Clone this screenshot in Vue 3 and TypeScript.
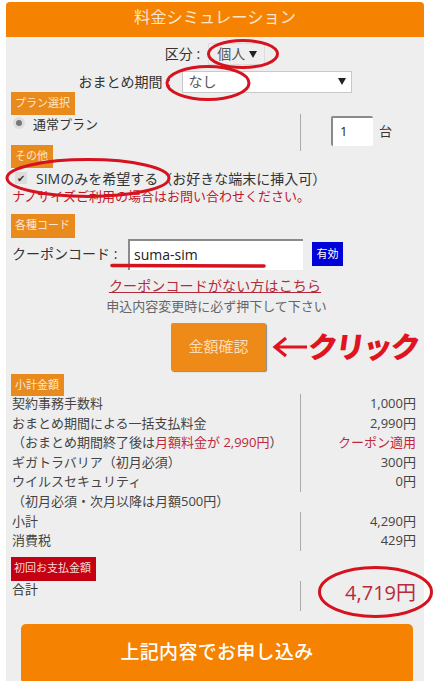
<script setup lang="ts">
interface Row { label: string; value?: string; red?: string; valueRed?: boolean; }
const rows: Row[] = [
  { label: '契約事務手数料', value: '1,000円' },
  { label: 'おまとめ期間による一括支払料金', value: '2,990円' },
  { label: '（おまとめ期間終了後は', red: '月額料金が 2,990円', value: 'クーポン適用', valueRed: true },
  { label: 'ギガトラバリア（初月必須）', value: '300円' },
  { label: 'ウイルスセキュリティ', value: '0円' },
  { label: '（初月必須・次月以降は月額500円）' },
  { label: '小計', value: '4,290円' },
  { label: '消費税', value: '429円' },
];
</script>

<template>
  <div class="page">
    <div class="panel">
      <header class="head">料金シミュレーション</header>
      <div class="body">
        <div class="line kubun">
          <span class="kubun-label">区分 :</span>
          <div class="select small"><span>個人</span><i class="caret"></i></div>
        </div>
        <div class="line period">
          <span class="period-label">おまとめ期間</span><b class="colon">:</b>
          <div class="select wide"><span>なし</span><i class="caret"></i></div>
        </div>
        <div class="tag t1">プラン選択</div>
        <div class="plan">
          <div class="plan-left"><span class="radio"></span>通常プラン</div>
          <div class="plan-right">
            <div class="qty">1</div><span>台</span>
          </div>
        </div>
        <div class="tag t2">その他</div>
        <div class="sim">
          <span class="check">✔</span><span>SIMのみを希望する（お好きな端末に挿入可）</span>
        </div>
        <div class="nano">ナノサイズご利用の場合はお問い合わせください。</div>
        <div class="tag t3">各種コード</div>
        <div class="coupon">
          <span class="coupon-label">クーポンコード :</span>
          <div class="coupon-input">suma-sim</div>
          <div class="apply">有効</div>
        </div>
        <a class="link">クーポンコードがない方はこちら</a>
        <div class="note">申込内容変更時に必ず押下して下さい</div>
        <div class="confirm-row">
          <div class="confirm">金額確認</div>
        </div>
        <div class="tag t4">小計金額</div>
        <div class="table">
          <div v-for="r in rows" :key="r.label" class="trow">
            <div class="tl">{{ r.label }}<span v-if="r.red" class="red">{{ r.red }}</span><span v-if="r.red">）</span></div>
            <div class="tv" :class="{ red: r.valueRed, nodiv: !r.value }">{{ r.value }}</div>
          </div>
        </div>
        <div class="tag t5">初回お支払金額</div>
        <div class="total">
          <div class="total-label">合計</div>
          <div class="total-value">4,719円</div>
        </div>
        <div class="submit">上記内容でお申し込み</div>
      </div>
    </div>

    <div class="click-note">
      <svg class="arrow" width="36" height="24" viewBox="0 0 36 24" aria-hidden="true">
        <path d="M35 12H4M14 3 3 12l11 9" fill="none" stroke="#e01420" stroke-width="3.2" />
      </svg>
      <span>クリック</span>
    </div>

    <svg class="marks" width="433" height="681" viewBox="0 0 433 681" aria-hidden="true">
      <g fill="none" stroke="#d5121e" stroke-width="3">
        <ellipse cx="243" cy="54" rx="34.5" ry="13.5" />
        <ellipse cx="208" cy="83" rx="41" ry="16.5" />
        <ellipse cx="88" cy="178" rx="81" ry="18.5" />
        <ellipse cx="375.5" cy="592" rx="56" ry="24.5" />
        <path d="M112 265.5 264 266" stroke-width="3.6" stroke-linecap="round" />
      </g>
    </svg>
  </div>
</template>

<style scoped>
.page {
  position: relative;
  width: 433px;
  height: 681px;
  overflow: hidden;
  background: #fff;
  color: #333;
  font-family: "Open Sans", "Noto Sans CJK JP", sans-serif;
  font-size: 13px;
}
.panel {
  width: 418px;
  margin: 2px 0 0 6px;
  background: #eee;
  border-radius: 4px 4px 0 0;
}
.head {
  height: 35px;
  line-height: 30px;
  text-align: center;
  color: #fbe6cf;
  background: #f58200;
  border-radius: 4px 4px 0 0;
  font-size: 16.3px;
}
.body {
  padding: 0 5px;
  display: flex;
  flex-direction: column;
}
.body > * {
  flex-shrink: 0;
}
.line {
  display: flex;
  justify-content: center;
  align-items: center;
  font-size: 14px;
  line-height: 20px;
}
.kubun {
  height: 34px;
}
.kubun-label {
  margin-right: 8px;
}
.period {
  height: 21px;
}
.colon {
  margin: 0 11px 0 4px;
  font-weight: 700;
}
.select {
  display: flex;
  align-items: center;
  justify-content: space-between;
  box-sizing: border-box;
  height: 22px;
  background: #fff;
  border: 1px solid #c9c9c9;
  color: #555;
  font-size: 14px;
}
.small {
  width: 57px;
  padding: 0 7px 0 8px;
  background: #eee;
  border-color: #ddd;
}
.wide {
  width: 170px;
  padding: 0 5px 0 6px;
}
.caret {
  width: 0;
  height: 0;
  border-left: 4px solid transparent;
  border-right: 4px solid transparent;
  border-top: 7px solid #222;
}
.tag {
  align-self: flex-start;
  box-sizing: border-box;
  height: 23px;
  line-height: 22px;
  padding: 0 4px;
  background: #e98a1c;
  color: #fbe6cf;
  font-size: 11px;
  white-space: nowrap;
  overflow: hidden;
}
.t1 { width: 64px; }
.t2 { width: 42px; }
.t3 { width: 64px; margin-top: 8px; height: 24px; }
.t4 { width: 53px; margin-top: 3px; height: 22px; }
.t5 { width: 85px; margin-top: 6px; height: 24px; padding: 0 3px; background: #c40012; color: #f7dcdc; }
.plan {
  height: 30px;
  display: flex;
}
.plan-left {
  display: flex;
  align-items: center;
  height: 16px;
  gap: 8px;
  padding-left: 2px;
  flex: 0 0 287px;
}
.radio {
  box-sizing: border-box;
  width: 12px;
  height: 12px;
  border-radius: 50%;
  background: #777;
  border: 3px solid #ddd;
}
.plan-right {
  display: flex;
  align-items: flex-start;
  gap: 6px;
  box-sizing: border-box;
  height: 37px;
  margin-top: -1px;
  padding-top: 2px;
  border-left: 1px solid #aaa;
  padding-left: 30px;
  position: relative;
  z-index: 1;
  line-height: 30px;
}
.qty {
  box-sizing: border-box;
  width: 42px;
  height: 30px;
  line-height: 27px;
  padding-left: 7px;
  background: #fff;
  border-top: 2px solid #8a8a8a;
  border-left: 2px solid #8a8a8a;
  border-radius: 2px;
  color: #222;
  font-size: 13px;
}
.sim {
  height: 19px;
  display: flex;
  align-items: center;
  gap: 9px;
  font-size: 14px;
  padding-left: 4px;
}
.check {
  box-sizing: border-box;
  width: 12px;
  height: 12px;
  font-size: 10px;
  line-height: 12px;
  text-align: center;
  background: #ddd;
  color: #333;
  flex: none;
}
.nano {
  color: #c0172b;
  font-size: 13px;
  height: 19px;
  line-height: 19px;
  padding-left: 1px;
  white-space: nowrap;
}
.coupon {
  display: flex;
  align-items: center;
  height: 32px;
  font-size: 14px;
  padding-left: 1px;
}
.coupon-label {
  width: 116px;
  white-space: nowrap;
  padding-bottom: 3px;
}
.coupon-input {
  box-sizing: border-box;
  width: 175px;
  height: 31px;
  line-height: 28px;
  padding-left: 4px;
  background: #fff;
  border-top: 2px solid #8a8a8a;
  border-left: 2px solid #8a8a8a;
  color: #222;
  font-size: 14px;
}
.apply {
  width: 31px;
  height: 24px;
  line-height: 23px;
  margin-left: 9px;
  background: #0000d8;
  color: #fff;
  text-align: center;
  font-size: 11px;
}
.link {
  align-self: center;
  height: 21px;
  line-height: 21px;
  margin-top: 5px;
  color: #b32a3a;
  font-size: 14px;
  letter-spacing: 0.15px;
  text-decoration: underline;
}
.note {
  text-align: center;
  height: 19px;
  line-height: 19px;
  color: #666;
  font-size: 13px;
  margin-top: 1px;
  padding-left: 3px;
}
.confirm-row {
  display: flex;
  padding-left: 160px;
  margin-top: 7px;
}
.confirm {
  width: 95px;
  height: 48px;
  line-height: 46px;
  text-align: center;
  background: #ee8a17;
  border-radius: 2px;
  box-shadow: 1px 1px 1px #888;
  color: #fbdcb8;
  font-size: 15px;
}
.table {
  display: flex;
  flex-direction: column;
  margin-top: -2px;
}
.trow {
  display: grid;
  grid-template-columns: 289px 1fr;
  height: 19.6px;
  line-height: 19.6px;
  font-size: 13px;
  color: #444;
}
.tl {
  padding-left: 1px;
  white-space: nowrap;
}
.tv {
  border-left: 1px solid #aaa;
  text-align: right;
  padding-right: 3px;
}
.tv.nodiv {
  border-left-color: transparent;
}
.red {
  color: #c0283a;
}
.total {
  display: grid;
  grid-template-columns: 289px 1fr;
  height: 30px;
}
.total-label {
  padding-left: 1px;
  line-height: 16px;
  font-size: 13px;
  color: #333;
}
.total-value {
  border-left: 1px solid #aaa;
  text-align: right;
  padding-right: 3px;
  color: #b82a38;
  font-size: 20px;
  line-height: 24px;
}
.submit {
  margin: 13px 0 0 10px;
  width: 392px;
  height: 60px;
  line-height: 56px;
  text-align: center;
  color: #fff;
  background: #f58200;
  border-radius: 5px;
  font-size: 19px;
  font-weight: 500;
  letter-spacing: 0.3px;
}
.click-note {
  position: absolute;
  left: 272px;
  top: 328px;
  display: flex;
  align-items: center;
  color: #e01420;
  font-size: 29.5px;
  line-height: 38px;
  font-weight: 900;
  letter-spacing: -2px;
  white-space: nowrap;
}
.click-note span {
  display: inline-block;
  transform: skewX(-8deg);
}
.marks {
  position: absolute;
  inset: 0;
  pointer-events: none;
}
</style>
